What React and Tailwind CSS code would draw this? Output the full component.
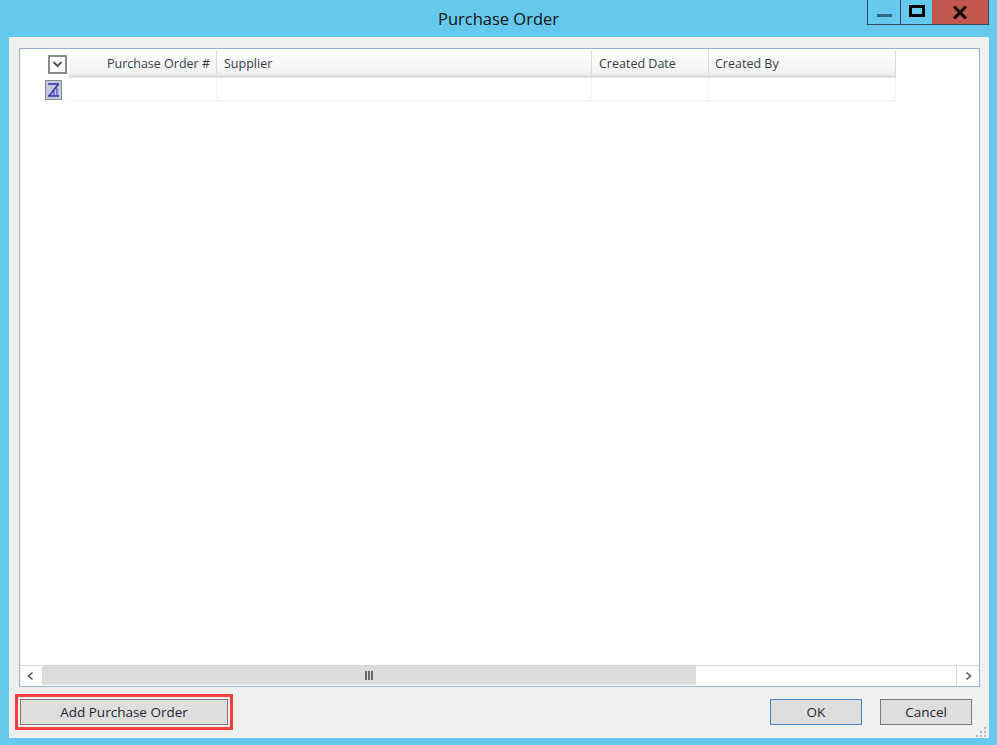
const columns = [
  { label: 'Purchase Order #', width: 'w-[148px]', align: 'justify-end pr-[6px]' },
  { label: 'Supplier', width: 'w-[375px]', align: 'pl-[7px]' },
  { label: 'Created Date', width: 'w-[117px]', align: 'pl-[7px]' },
  { label: 'Created By', width: 'w-[187px]', align: 'pl-[6px]' },
];

function DialogButton({ children, className = '' }) {
  return (
    <button
      className={`h-[26px] bg-[#dedede] border text-[13.5px] text-[#1f2430] flex items-center justify-center ${className}`}
    >
      {children}
    </button>
  );
}

function ScrollArrow({ d }) {
  return (
    <div className="w-[22px] h-full bg-white flex items-center justify-center shrink-0">
      <svg width="10" height="10" viewBox="0 0 10 10" fill="none" stroke="#555" strokeWidth="1.6">
        <path d={d} />
      </svg>
    </div>
  );
}

export default function App() {
  return (
    <div
      className="w-[997px] h-[745px] bg-[#64c9ec] flex flex-col overflow-hidden"
      style={{ fontFamily: '"Open Sans", "Noto Sans", sans-serif' }}
    >
      {/* title bar */}
      <div className="h-[37px] shrink-0 grid grid-cols-[1fr_auto_1fr]">
        <div />
        <div className="text-[16.5px] leading-[37px] text-[#111]">Purchase Order</div>
        <div className="flex justify-end items-start pr-[8px]">
          <div className="flex h-[25px] border border-t-0 border-[#3a4a55]">
            <div className="w-[33px] border-r border-[#3a4a55] flex items-center justify-center">
              <div className="w-[15px] h-[3px] bg-[#35667f] mt-[6px]" />
            </div>
            <div className="w-[31px] flex items-start justify-center pt-[5px]">
              <div className="w-[16px] h-[12px] border-[3px] border-black" />
            </div>
            <div className="w-[56px] bg-[#c4574d] flex items-center justify-center">
              <svg width="14" height="13" viewBox="0 0 14 13" stroke="black" strokeWidth="3" fill="none">
                <path d="M1 0.5 L13 12.5 M13 0.5 L1 12.5" />
              </svg>
            </div>
          </div>
        </div>
      </div>

      {/* client area */}
      <div className="relative w-[980px] h-[701px] ml-[9px] bg-[#f0f0f0] pt-[11px] px-[10px]">
        <div className="w-[961px] h-[639px] border border-[#9db0d2] bg-white flex flex-col">
          <div className="flex-1 pt-[1px] pl-[25px]">
            {/* header */}
            <div className="flex h-[28px] text-[12.5px] text-[#333d4a]">
              <div className="w-[24px] flex items-center">
                <div className="w-[19px] h-[19px] border-2 border-[#8a8a8a] bg-white flex items-center justify-center ml-[3px]">
                  <svg width="11" height="8" viewBox="0 0 11 8" fill="none" stroke="#555" strokeWidth="2">
                    <path d="M1.5 2 L5.5 6 L9.5 2" />
                  </svg>
                </div>
              </div>
              {columns.map((c) => (
                <div
                  key={c.label}
                  className={`${c.width} ${c.align} flex items-center pt-[4px] border-r border-b-[3px] border-r-[#dcdcdc] border-b-[#e0e0e0] bg-gradient-to-b from-white to-[#f0f0f0]`}
                >
                  {c.label}
                </div>
              ))}
            </div>
            {/* filter row */}
            <div className="flex h-[23px]">
              <div className="w-[24px] flex items-start">
                <div className="w-[17px] h-[20px] bg-[#c3c8e0] border border-[#8a8a8a] flex items-center justify-center mt-[2px]">
                  <svg width="13" height="16" viewBox="0 0 13 16" fill="none" stroke="#2f33a0" strokeWidth="1.5">
                    <path d="M1 2 H12 M11.5 2 L2 14 M1 14 H12" />
                    <path d="M7 9 V14 M10 6 V14" strokeWidth="1" />
                  </svg>
                </div>
              </div>
              {columns.map((c) => (
                <div key={c.label} className={`${c.width} border-r border-b border-[#f3f3f3]`} />
              ))}
            </div>
          </div>
          {/* horizontal scrollbar */}
          <div className="h-[20px] flex items-stretch border-t border-[#d6d6d6] mb-[1px] bg-white">
            <ScrollArrow d="M6.5 1.5 L2.5 5 L6.5 8.5" />
            <div className="w-[654px] bg-[#dcdcdc] flex items-center justify-center">
              <div className="flex gap-[1px]">
                <div className="w-[2px] h-[9px] bg-[#666]" />
                <div className="w-[2px] h-[9px] bg-[#666]" />
                <div className="w-[2px] h-[9px] bg-[#666]" />
              </div>
            </div>
            <div className="flex-1 border-r border-[#d6d6d6]" />
            <ScrollArrow d="M3.5 1.5 L7.5 5 L3.5 8.5" />
          </div>
        </div>

        {/* footer buttons */}
        <div className="flex items-center mt-[7px] -ml-[4px] pr-[7px]">
          <div className="border-[3px] border-[#f44040] p-[2px]">
            <DialogButton className="w-[208px] border-[#7a7a7a]">Add Purchase Order</DialogButton>
          </div>
          <div className="ml-auto flex gap-[18px]">
            <DialogButton className="w-[92px] border-[#3f8ac4]">OK</DialogButton>
            <DialogButton className="w-[92px] border-[#7a7a7a]">Cancel</DialogButton>
          </div>
        </div>

        {/* resize grip */}
        <svg className="absolute right-[2px] bottom-[1px]" width="12" height="11" viewBox="0 0 12 11" fill="#b5b5b5">
          <rect x="9" y="1" width="2" height="2" />
          <rect x="5" y="5" width="2" height="2" />
          <rect x="9" y="5" width="2" height="2" />
          <rect x="1" y="9" width="2" height="2" />
          <rect x="5" y="9" width="2" height="2" />
          <rect x="9" y="9" width="2" height="2" />
        </svg>
      </div>
    </div>
  );
}
